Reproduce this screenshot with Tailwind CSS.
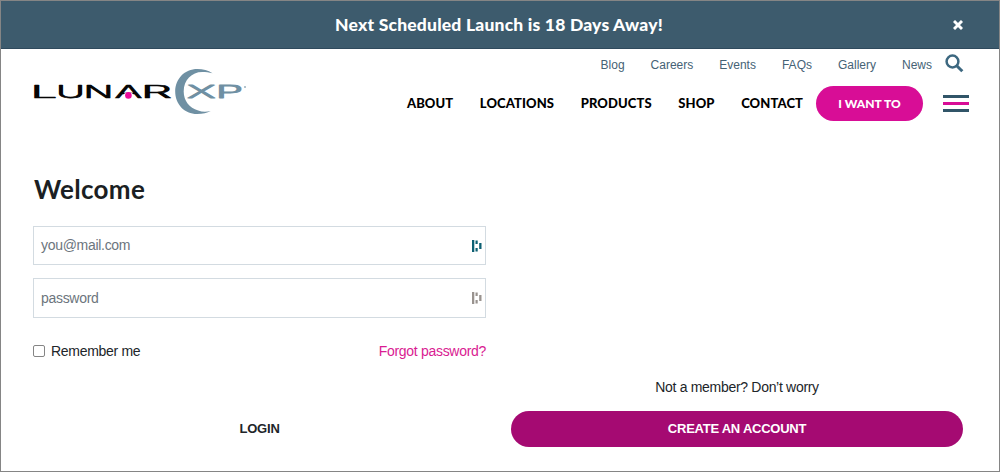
<!DOCTYPE html>
<html lang="en">
<head>
<meta charset="utf-8">
<title>Lunar XP</title>
<script src="https://cdn.jsdelivr.net/npm/@tailwindcss/browser@4"></script>
</head>
<body class="bg-white">
<div class="flex h-[472px] w-[1000px] flex-col overflow-hidden border border-[#858585] bg-white font-['Liberation_Sans',sans-serif] text-[#212529]">
  <div class="flex h-12 shrink-0 items-center border-b border-[#2f4a5d] bg-[#3d5b6d] pl-[44px] text-white">
    <p class="flex-1 text-center font-[Lato,sans-serif] text-[17.5px] leading-6 font-black tracking-[0.2px] whitespace-nowrap">Next Scheduled Launch is 18 Days Away!</p>
    <button class="mr-[36px] flex h-5 w-[10px] items-center justify-center" aria-label="Close">
      <svg class="size-[10px]" viewBox="0 0 10 10" fill="none" stroke="currentColor" stroke-width="2.9"><path d="M1 1l8 8M9 1l-8 8"/></svg>
    </button>
  </div>
  <header class="flex h-[81px] shrink-0 pl-[19px]">
    <svg class="mt-[11px] h-[65px] w-[240px] shrink-0" viewBox="0 0 240 65" role="img" aria-label="Lunar XP">
      <text y="38.300" font-family="Inter, sans-serif" font-size="17" font-weight="300" fill="#050505" stroke="#050505" stroke-width="0.600" stroke-linejoin="round"><tspan x="10.500" textLength="27" lengthAdjust="spacingAndGlyphs">L</tspan><tspan x="36" textLength="29" lengthAdjust="spacingAndGlyphs">U</tspan><tspan x="63.500" textLength="30" lengthAdjust="spacingAndGlyphs">N</tspan><tspan x="94.500" textLength="28" lengthAdjust="spacingAndGlyphs">A</tspan><tspan x="121" textLength="31" lengthAdjust="spacingAndGlyphs">R</tspan></text>
      <path d="M102.500 36.200l2.500-3.200h7l2.700 3.200z" fill="#fff"/>
      <circle cx="108.400" cy="35.400" r="3.300" fill="#ec0c9c"/>
      <path d="M192.500 13.300C188 10.300 183 9 177.500 9 164.500 9 155.200 19 155.200 31.500c0 12.500 9 22.500 22 22.500 5.500 0 10-1 13.500-3-4.500 1-8.500 1-12.500-.5-9-2.500-14.500-10-14.500-19 0-11.500 8-19.500 18.500-19.500 3.500 0 7 .3 10.300 1.300z" fill="#6f90a3"/>
      <text x="167" y="38.300" textLength="56" lengthAdjust="spacingAndGlyphs" font-family="Inter, sans-serif" font-size="17" font-weight="300" fill="#6f90a3" stroke="#6f90a3" stroke-width="0.800" stroke-linejoin="round">XP</text>
      <circle cx="225" cy="27" r="1" fill="#9bb0bd"/>
    </svg>
    <div class="flex flex-1 flex-col">
      <div class="flex h-[30px] items-center justify-end pr-[35px] text-[12px] text-[#456275]">
        <nav class="flex gap-[26px] pt-[2px] whitespace-nowrap">
          <a>Blog</a><a>Careers</a><a>Events</a><a>FAQs</a><a>Gallery</a><a>News</a>
        </nav>
        <svg class="-mt-[2px] ml-[13px] size-[19px]" viewBox="0 0 19 19" fill="none" stroke="#3d6880"><circle cx="7.500" cy="7.500" r="5.900" stroke-width="2.500"/><path d="M12 12l5.300 5.300" stroke-width="3"/></svg>
      </div>
      <div class="flex h-[48px] items-center justify-end pr-[30px]">
        <nav class="flex gap-[26.600px] pt-[2px] font-[Lato,sans-serif] text-[13px] font-black tracking-[0.1px] whitespace-nowrap text-black">
          <a>ABOUT</a><a>LOCATIONS</a><a>PRODUCTS</a><a>SHOP</a><a>CONTACT</a>
        </nav>
        <button class="ml-[13px] h-[35px] w-[107px] rounded-full bg-[#d80d96] pt-px font-[Lato,sans-serif] text-[12px] font-black whitespace-nowrap text-white">I WANT TO</button>
        <div class="ml-[20px] flex w-[26px] flex-col gap-[4px]">
          <span class="h-[3px] bg-[#315568]"></span><span class="h-[3px] bg-[#d80d96]"></span><span class="h-[3px] bg-[#315568]"></span>
        </div>
      </div>
    </div>
  </header>
  <main class="flex flex-1 gap-[25px] pt-[41px] pl-[32px]">
    <form class="flex w-[453px] flex-col">
      <h1 class="pl-px font-[Lato,sans-serif] text-[26px] leading-[36px] font-bold tracking-[0.3px] text-[#1b1f23]">Welcome</h1>
      <div class="mt-[19px] flex h-[39px] items-center justify-between border border-[#d3dbe1] pr-[3px] pl-[7px] text-[14px] tracking-[-0.300px] text-[#6c757d]">
        <span>you@mail.com</span>
        <svg class="h-3 w-[10px]" viewBox="0 0 10 12" fill="#0d6073"><path d="M0 0h2.300v12H0zM3.500 0.500h2.200v3.500h-2.200zM3.500 8h2.200v3.500h-2.200zM7.200 3h2.300v6h-2.300z"/></svg>
      </div>
      <div class="mt-[13px] flex h-10 items-center justify-between border border-[#d3dbe1] pr-[3px] pl-[7px] text-[14px] tracking-[-0.300px] text-[#6c757d]">
        <span>password</span>
        <svg class="h-3 w-[10px]" viewBox="0 0 10 12" fill="#99938f"><path d="M0 0h2.300v12H0zM3.500 0.500h2.200v3.500h-2.200zM3.500 8h2.200v3.500h-2.200zM7.200 3h2.300v6h-2.300z"/></svg>
      </div>
      <div class="mt-[23px] flex h-5 items-center justify-between text-[14px] tracking-[-0.300px]">
        <label class="flex items-center gap-[6px]"><span class="size-3 rounded-[2px] border border-[#858585]"></span>Remember me</label>
        <a class="text-[#d91b92]">Forgot password?</a>
      </div>
      <button class="mt-[50px] h-9 text-[13px] font-bold tracking-[-0.2px]">LOGIN</button>
    </form>
    <section class="flex w-[452px] flex-col pt-[206px]">
      <p class="h-5 text-center text-[14px] leading-5 tracking-[-0.300px]">Not a member? Don’t worry</p>
      <button class="mt-[14px] h-9 rounded-full bg-[#a50a72] text-[13px] font-bold tracking-[-0.250px] text-white">CREATE AN ACCOUNT</button>
    </section>
  </main>
</div>
</body>
</html>
